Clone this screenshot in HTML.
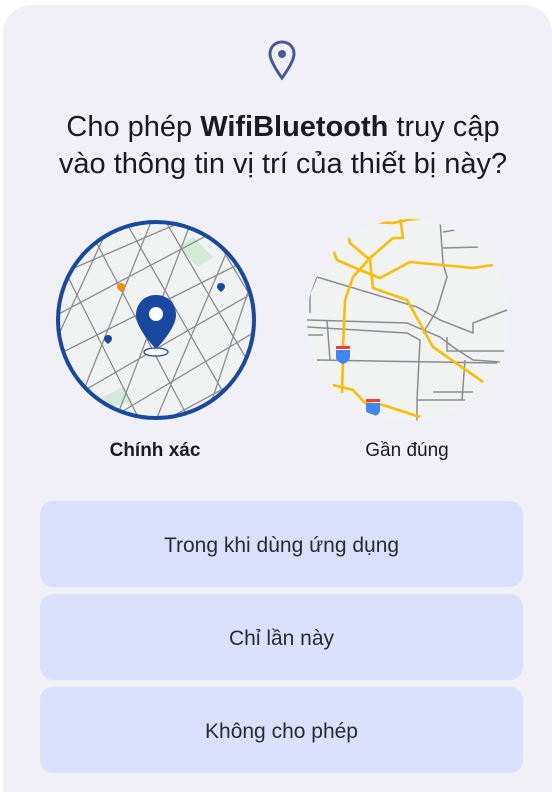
<!DOCTYPE html>
<html style="height:792px;overflow:hidden"><head><meta charset="utf-8"><style>
body{margin:0;width:552px;height:792px;background:#fff;font-family:"Liberation Sans",sans-serif;overflow:hidden;position:relative}
.card{position:absolute;left:3px;top:5px;width:549px;height:787px;background:#f1f0f7;border-radius:28px 28px 0 0}
.t{position:absolute;left:0;width:560px;top:104px;text-align:center;font-size:29px;line-height:37px;color:#1b1b1f}
.lbl{position:absolute;top:435px;font-size:19px;color:#1b1b1f;text-align:center;width:200px}
.btn{position:absolute;left:37px;width:483px;height:86px;background:#dbe1fc;border-radius:13px;text-align:center;line-height:90px;font-size:21px;color:#2a2a30}
</style></head><body>
<div class="card">
<svg style="position:absolute;left:263px;top:34px" width="32" height="44" viewBox="0 0 32 44"><path d="M16 3C9 3 4 8 4 15c0 8 12 24 12 24s12-16 12-24C28 8 23 3 16 3z" fill="none" stroke="#48599a" stroke-width="3"/><circle cx="16" cy="15" r="4" fill="#48599a"/></svg>
<div class="t">Cho phép <b>WifiBluetooth</b> truy cập<br>vào thông tin vị trí của thiết bị này?</div>
<svg style="position:absolute;left:50px;top:212px" width="206" height="206" viewBox="0 0 206 206">
<defs><clipPath id="c1"><circle cx="103" cy="103" r="98"/></clipPath></defs>
<circle cx="103" cy="103" r="98" fill="#f1f2f2"/>
<g clip-path="url(#c1)" stroke="#8a8c90" stroke-width="1.3" fill="none">
<path d="M140 20l20 20-15 10-20-20z" fill="#d4ead8" stroke="none"/>
<path d="M50 180l20-10 10 15-25 5z" fill="#d4ead8" stroke="none"/>
<path d="M0 60L140 0M0 100L170 10M0 140L200 40M20 180L210 70M60 200L210 110M100 210L210 150"/>
<path d="M30 0L140 210M0 30L90 210M70 0L190 210M110 0L210 170M150 0L210 100"/>
<path d="M60 0L0 130M100 0L20 200M140 0L60 210M180 20L100 210M200 60L150 210"/>
</g>
<circle cx="103" cy="103" r="98" fill="none" stroke="#1848a0" stroke-width="4"/>
<path d="M103 78c-12 0-20 9-20 20 0 14 20 34 20 34s20-20 20-34c0-11-8-20-20-20z" fill="#1848a0"/>
<circle cx="103" cy="97" r="7" fill="#fff"/>
<ellipse cx="103" cy="135" rx="12" ry="4" fill="#fff" stroke="#1848a0" stroke-width="1.3"/>
<path d="M68 66c-3 0-4 2-4 4 0 2 4 5 4 5s4-3 4-5c0-2-1-4-4-4z" fill="#f09300"/>
<path d="M168 66c-3 0-4 2-4 4 0 2 4 5 4 5s4-3 4-5c0-2-1-4-4-4z" fill="#1848a0"/>
<path d="M55 118c-3 0-4 2-4 4 0 2 4 5 4 5s4-3 4-5c0-2-1-4-4-4z" fill="#1848a0"/>
</svg>
<svg style="position:absolute;left:302px;top:212px" width="206" height="206" viewBox="0 0 206 206">
<defs><clipPath id="c2"><circle cx="103" cy="103" r="101"/></clipPath></defs>
<circle cx="103" cy="103" r="101" fill="#f1f2f2"/>
<g clip-path="url(#c2)" fill="none">
<g stroke="#8a8c90" stroke-width="1.5">
<path d="M12 60L55 73L112 90L135 103L168 116L168 106L202 93"/>
<path d="M2 103L102 106L135 120L148 130L168 143L210 146"/>
<path d="M2 110L102 116L115 123L112 183L112 206"/>
<path d="M2 118H18M12 143L192 146M135 3L138 46L142 60L132 93L118 116"/>
<path d="M138 31L175 30M138 15L150 13M12 60L5 76L5 96M22 103L25 143"/>
<path d="M128 175H168M160 143L157 183M112 183H160M142 120V134H200"/>
<path d="M40 0V10"/>
</g>
<g stroke="#fbbc04" stroke-width="2.6" stroke-linejoin="round">
<path d="M68 5L88 6L102 3L132 0"/>
<path d="M95 0L98 21L88 21L65 41L48 60L40 83L38 130"/>
<path d="M38 143L37 176"/>
<path d="M28 33L32 43L55 53L75 61L105 45L168 51L188 48"/>
<path d="M43 18L45 26L65 43L68 71L102 83L128 130L178 165"/>
<path d="M28 168L48 173L60 186L78 188L115 200"/>
</g>
<path d="M31 133h14v7c0 4-4 6-7 7-3-1-7-3-7-7z" fill="#4285f4"/><rect x="31" y="129" width="14" height="3" fill="#ea4335"/>
<path d="M61 186h14v7c0 4-4 6-7 7-3-1-7-3-7-7z" fill="#4285f4"/><rect x="61" y="182" width="14" height="3" fill="#ea4335"/>
</g>
</svg>
<div class="lbl" style="left:52px;font-weight:bold">Chính xác</div>
<div class="lbl" style="left:304px">Gần đúng</div>
<div class="btn" style="top:496px">Trong khi dùng ứng dụng</div>
<div class="btn" style="top:589px">Chỉ lần này</div>
<div class="btn" style="top:682px">Không cho phép</div>
</div>
</body></html>
